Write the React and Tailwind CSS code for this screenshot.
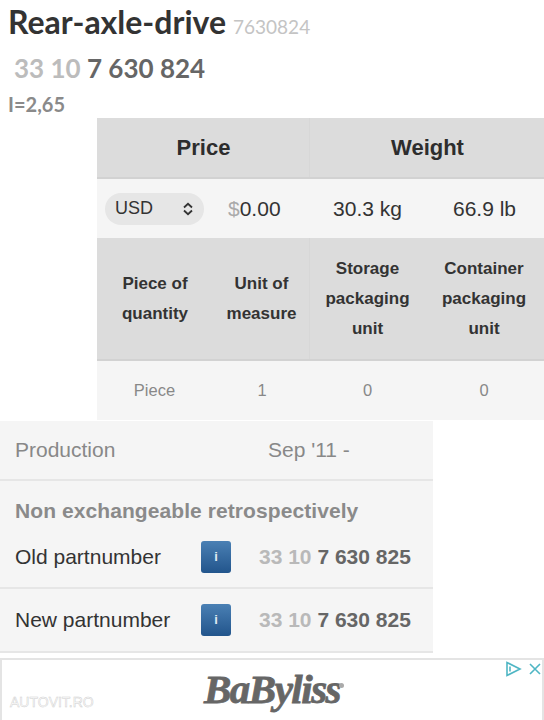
import React from "react";

const sans = "font-['Liberation_Sans',Arial,sans-serif]";

function Info() {
  return (
    <div className="w-[30px] h-[32px] rounded-[3px] bg-gradient-to-b from-[#4a80b4] to-[#22558c] flex items-center justify-center text-[#dfe9f3] text-[13px] font-bold">
      i
    </div>
  );
}

function PartRow({ label, h }) {
  return (
    <div className={`flex items-center ${h} border-b-2 border-[#e6e6e6]`}>
      <div className="w-[201px] pl-[15px] text-[21px] text-[#333]">{label}</div>
      <Info />
      <div className="ml-[28px] text-[21px] font-bold whitespace-nowrap text-[#666]">
        <span className="text-[#b9b9b9]">33 10</span> 7 630 825
      </div>
    </div>
  );
}

export default function App() {
  return (
    <div className={`w-[544px] h-[720px] overflow-hidden bg-white ${sans}`}>
      <div className="font-['Lato',sans-serif] pl-2">
        <div className="h-[44px] flex items-baseline font-bold text-[32px] text-[#333] leading-[44px]">
          Rear-axle-drive
          <span className="ml-[7px] text-[19px] font-normal text-[#c4c4c4]">7630824</span>
        </div>
        <div className="h-[48px] pl-[6px] leading-[48px] text-[26px] font-bold text-[#666]">
          <span className="text-[#bcbcbc]">33 10</span> 7 630 824
        </div>
        <div className="h-[26px] leading-[24px] text-[20px] font-bold text-[#8a8a8a]">I=2,65</div>
      </div>

      <div className="ml-[97px] w-[447px]">
        <div className="grid grid-cols-[213px_234px] h-[61px] bg-[#dcdcdc] border-b-2 border-[#d2d2d2] text-[22px] font-bold text-[#2d2d2d] text-center">
          <div className="flex items-center justify-center border-r border-[#d7d7d7] pl-[1px]">Price</div>
          <div className="flex items-center justify-center pl-[1px]">Weight</div>
        </div>
        <div className="grid grid-cols-[213px_115px_119px] h-[59px] bg-[#f5f5f5] items-center text-center text-[21px] text-[#333]">
          <div className="flex items-center">
            <div className="ml-[8px] w-[99px] h-[32px] rounded-full bg-[#e6e6e6] flex items-center justify-between px-[10px] text-[18px] text-[#333]">
              USD
              <svg width="12" height="14" viewBox="0 0 12 14" fill="none" stroke="#333" strokeWidth="1.8">
                <path d="M2 5.5 6 1.8l4 3.7M2 8.5l4 3.7 4-3.7" />
              </svg>
            </div>
            <div className="ml-[24px]">
              <span className="text-[#aaa]">$</span>0.00
            </div>
          </div>
          <div>30.3 kg</div>
          <div>66.9 lb</div>
        </div>
        <div className="grid grid-cols-[115px_98px_115px_119px] h-[123px] bg-[#dcdcdc] border-b-2 border-[#d2d2d2] text-center text-[17px] leading-[30px] font-bold text-[#333]">
          <div className="flex items-center justify-center pl-[1px]">Piece of<br />quantity</div>
          <div className="flex items-center justify-center pl-[2px] border-r border-[#d7d7d7]">Unit of<br />measure</div>
          <div className="flex items-center justify-center">Storage<br />packaging<br />unit</div>
          <div className="flex items-center justify-center pr-[1px]">Container<br />packaging<br />unit</div>
        </div>
        <div className="grid grid-cols-[115px_98px_115px_119px] h-[59px] bg-[#f5f5f5] items-center text-center text-[16.5px] text-[#888]">
          <div>Piece</div>
          <div className="pl-[2px]">1</div>
          <div>0</div>
          <div className="pr-[1px]">0</div>
        </div>
      </div>

      <div className="w-[433px] mt-[1px] bg-[#f5f5f5]">
        <div className="flex items-center h-[60px] border-b-2 border-[#e6e6e6] text-[21px] text-[#888]">
          <div className="w-[268px] pl-[15px]">Production</div>
          <div>Sep '11 -</div>
        </div>
        <div className="pt-[18px] pl-[15px] h-[45px] text-[21px] tracking-[0.08px] leading-[24px] font-bold text-[#8a8a8a] whitespace-nowrap">
          Non exchangeable retrospectively
        </div>
        <PartRow label="Old partnumber" h="h-[63px]" />
        <PartRow label="New partnumber" h="h-[64px]" />
      </div>

      <div className="relative mt-[5px] h-[64px] border-2 border-b-0 border-[#e4e4e4] flex justify-center">
        <span className="font-['Liberation_Serif',serif] italic font-bold text-[41px] leading-[58px] text-[#666] tracking-[-1.5px] [-webkit-text-stroke:0.8px_#666]">
          BaByliss
        </span>
        <span className="absolute left-[337px] top-[23px] w-[5px] h-[5px] rounded-full bg-[#aaa]"></span>
        <span className="absolute left-[8px] top-[33px] text-[14px] leading-[18px] text-white [-webkit-text-stroke:0.5px_#cfcfcf]">
          AUTOVIT.RO
        </span>
        <svg className="absolute right-0 top-0" width="38" height="18" viewBox="0 0 38 18" fill="none" stroke="#4fb6c4" strokeWidth="1.6">
          <path d="M3 2.5v13L16 9z" />
          <path d="M6 6.5v5" />
          <path d="M26 4l10 10M36 4 26 14" />
        </svg>
      </div>
    </div>
  );
}
